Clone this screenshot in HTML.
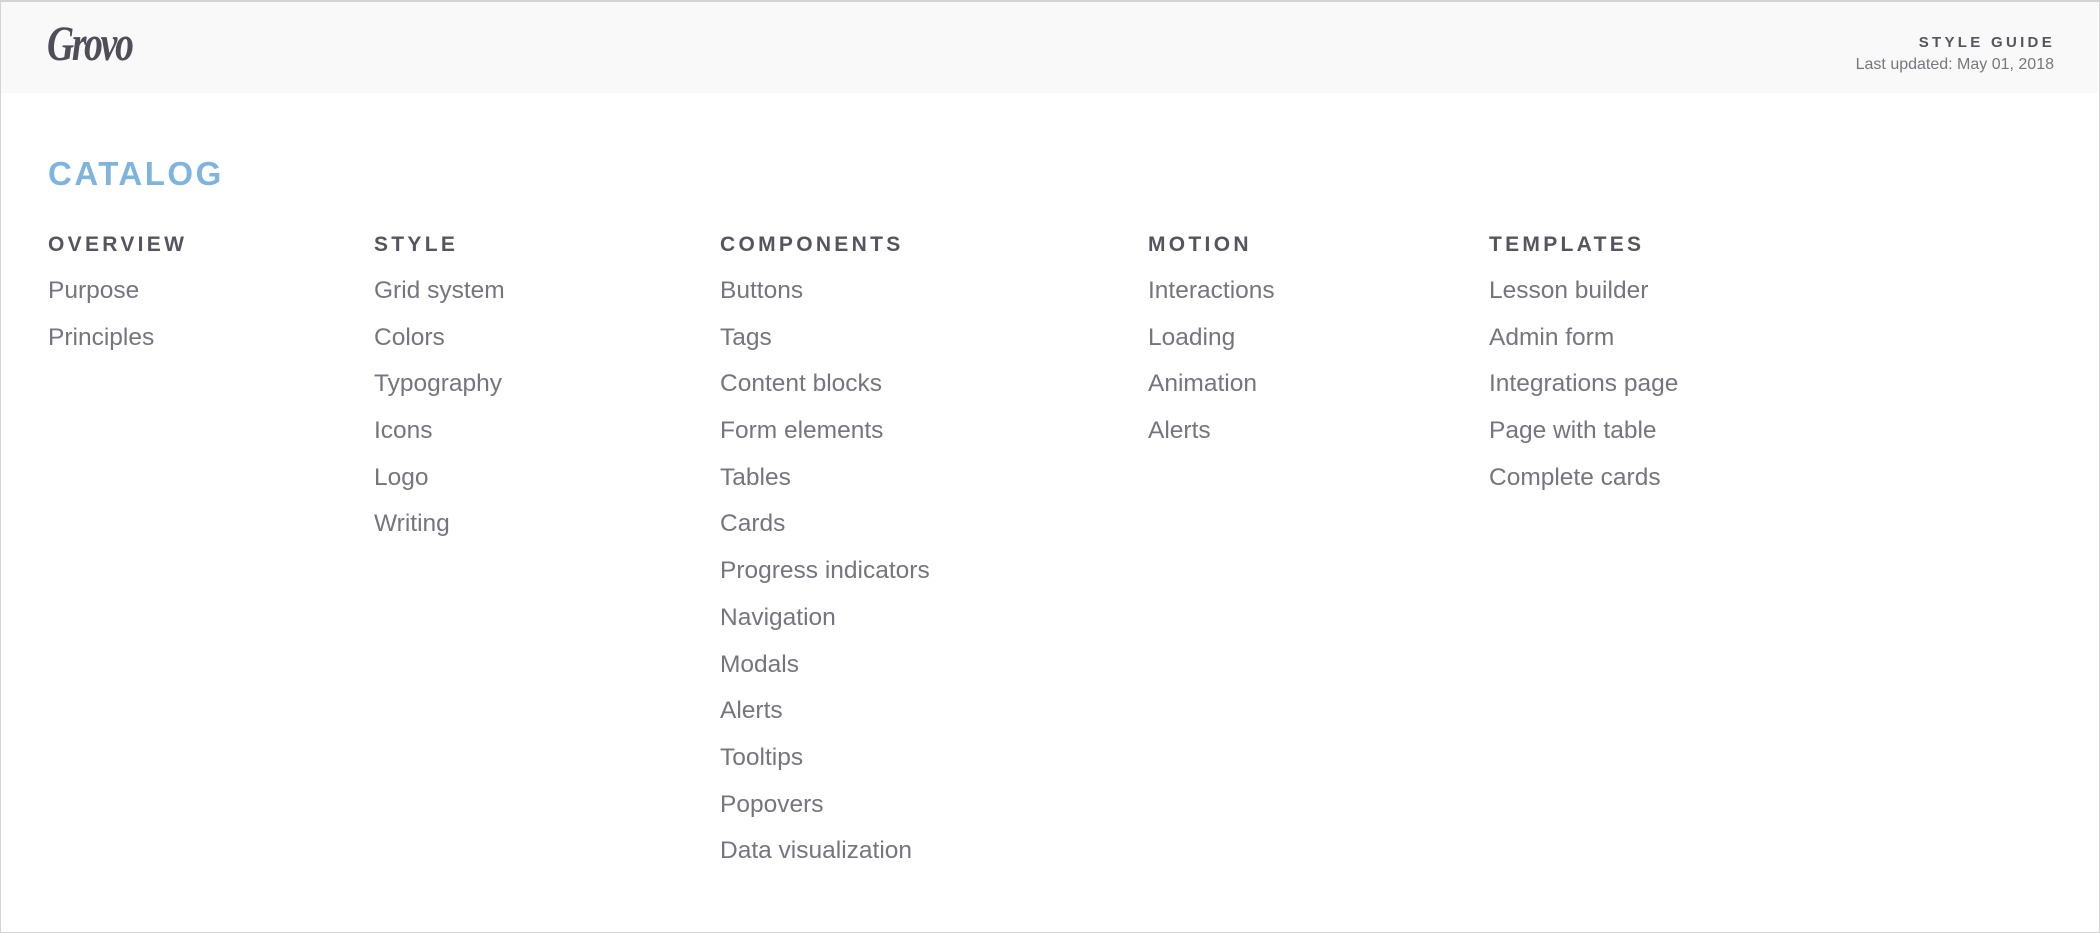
<!DOCTYPE html>
<html><head><meta charset="utf-8"><style>
*{margin:0;padding:0;box-sizing:border-box}
html,body{width:2100px;height:933px;overflow:hidden;background:#fff;font-family:"Liberation Sans",sans-serif}
.frame{position:absolute;left:0;top:0;width:2100px;height:933px;border:1px solid #d4d4d4;border-top:2px solid #d4d4d4}
.hdr{position:absolute;left:1px;top:2px;width:2097px;height:91px;background:#f9f9f9}
.logo{position:absolute;left:47px;top:14px;font-family:"Liberation Serif",serif;font-style:italic;font-weight:bold;font-size:50px;color:#4e4e58;letter-spacing:-3px;transform:scaleX(0.75);transform-origin:left top}
.sg{position:absolute;right:45px;top:34px;font-size:15px;font-weight:bold;letter-spacing:3.3px;color:#55555f;text-align:right}
.lu{position:absolute;right:46px;top:56px;font-size:16px;color:#777780}
.cat{position:absolute;left:48px;top:155px;font-size:33px;font-weight:bold;color:#80b4dd;letter-spacing:2.5px}
.col{position:absolute;top:233px}
.col h3{font-size:21px;font-weight:bold;letter-spacing:3.3px;color:#55555f;height:36px;line-height:24px}
.col div{font-size:24.5px;color:#75757f;height:46.7px;line-height:44px}
</style></head><body>
<div class="frame"></div>
<div class="hdr"></div>
<div class="logo">Grovo</div>
<div class="sg">STYLE GUIDE</div>
<div class="lu">Last updated: May 01, 2018</div>
<div class="cat">CATALOG</div>
<div class="col" style="left:48px"><h3>OVERVIEW</h3><div>Purpose</div><div>Principles</div></div>
<div class="col" style="left:374px"><h3>STYLE</h3><div>Grid system</div><div>Colors</div><div>Typography</div><div>Icons</div><div>Logo</div><div>Writing</div></div>
<div class="col" style="left:720px"><h3>COMPONENTS</h3><div>Buttons</div><div>Tags</div><div>Content blocks</div><div>Form elements</div><div>Tables</div><div>Cards</div><div>Progress indicators</div><div>Navigation</div><div>Modals</div><div>Alerts</div><div>Tooltips</div><div>Popovers</div><div>Data visualization</div></div>
<div class="col" style="left:1148px"><h3>MOTION</h3><div>Interactions</div><div>Loading</div><div>Animation</div><div>Alerts</div></div>
<div class="col" style="left:1489px"><h3>TEMPLATES</h3><div>Lesson builder</div><div>Admin form</div><div>Integrations page</div><div>Page with table</div><div>Complete cards</div></div>
</body></html>
